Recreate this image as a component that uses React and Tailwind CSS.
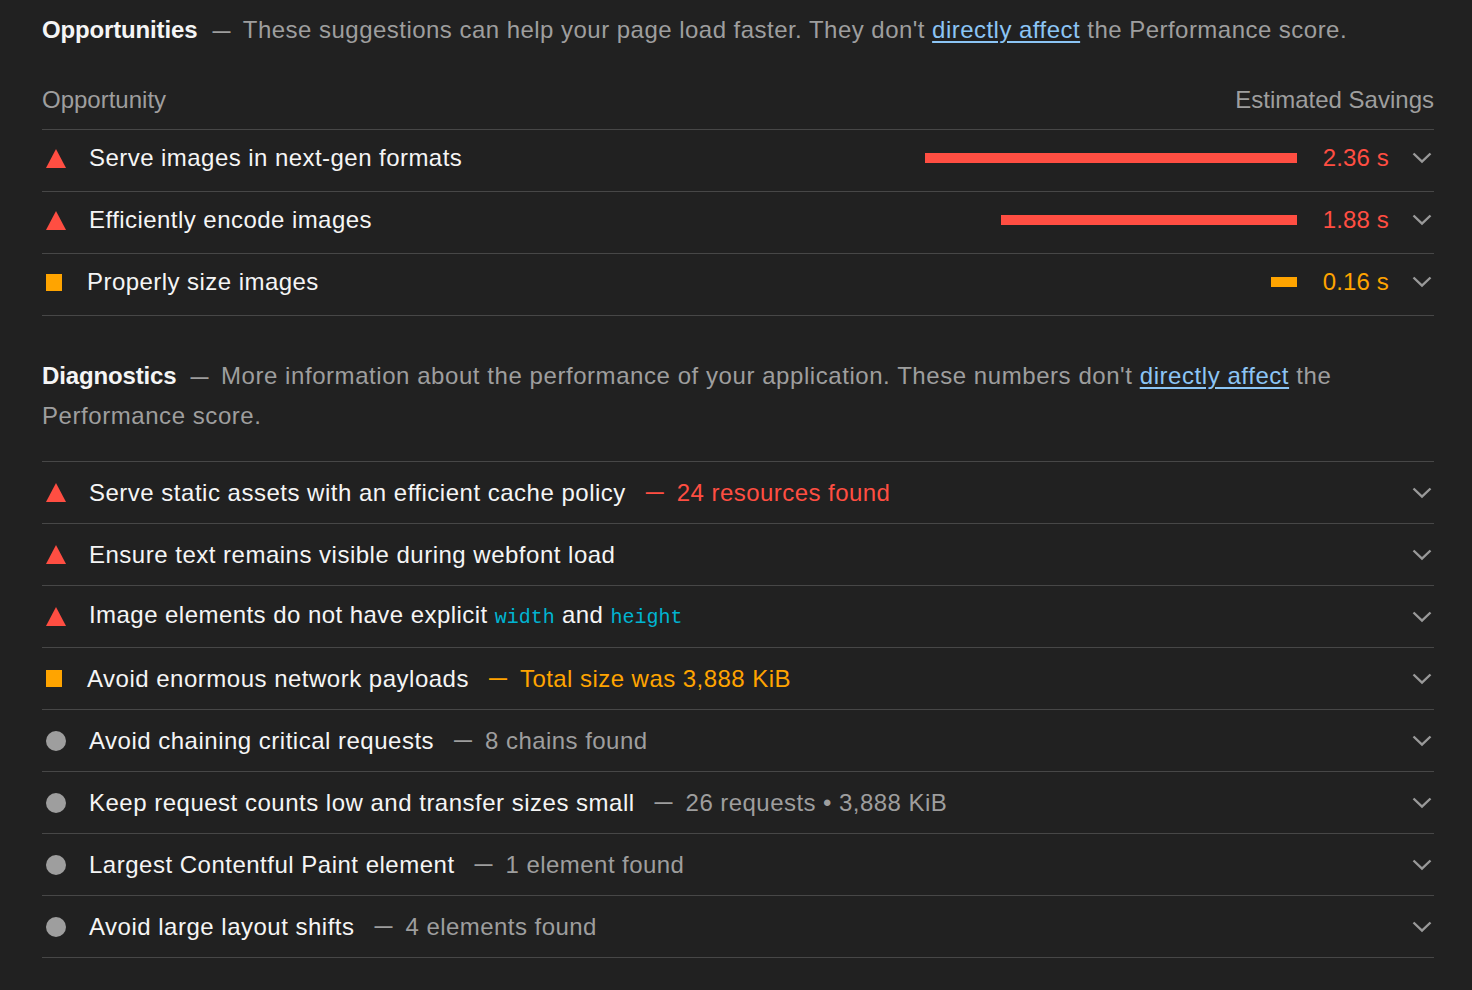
import React from 'react'

const RED = '#ff4e42'
const ORANGE = '#ffa400'

const opportunities = [
  { kind: 'fail', title: 'Serve images in next-gen formats', bar: 372, value: '2.36 s' },
  { kind: 'fail', title: 'Efficiently encode images', bar: 296, value: '1.88 s' },
  { kind: 'average', title: 'Properly size images', bar: 26, value: '0.16 s' },
]

const diagnostics = [
  { kind: 'fail', title: 'Serve static assets with an efficient cache policy', detail: '24 resources found' },
  { kind: 'fail', title: 'Ensure text remains visible during webfont load' },
  { kind: 'fail', code: true },
  { kind: 'average', title: 'Avoid enormous network payloads', detail: 'Total size was 3,888 KiB' },
  { kind: 'info', title: 'Avoid chaining critical requests', detail: '8 chains found' },
  { kind: 'info', title: 'Keep request counts low and transfer sizes small', detail: '26 requests • 3,888 KiB' },
  { kind: 'info', title: 'Largest Contentful Paint element', detail: '1 element found' },
  { kind: 'info', title: 'Avoid large layout shifts', detail: '4 elements found' },
]

function Icon({ kind }) {
  if (kind === 'fail') {
    return (
      <div className="ml-1 mr-[23px] flex w-5 shrink-0 items-center">
        <svg width="20" height="19" viewBox="0 0 20 19">
          <polygon points="10,0 20,19 0,19" fill={RED} />
        </svg>
      </div>
    )
  }
  if (kind === 'average') {
    return (
      <div className="ml-1 mr-[25px] flex w-4 shrink-0 items-center">
        <div className="h-[17px] w-4 bg-[#ffa400]" />
      </div>
    )
  }
  return (
    <div className="ml-1 mr-[23px] flex w-5 shrink-0 items-center justify-center">
      <div className="h-5 w-5 rounded-full bg-[#9e9e9e]" />
    </div>
  )
}

function Chevron() {
  return (
    <svg width="20" height="12" viewBox="0 0 20 12" className="shrink-0">
      <polyline points="1.5,1.5 10,9.5 18.5,1.5" fill="none" stroke="#999999" strokeWidth="2.4" />
    </svg>
  )
}

function Dash({ color = '' }) {
  return (
    <span className={`inline-block -translate-y-[1px] text-[18px] font-bold leading-none ${color}`}>—</span>
  )
}

function OpportunityRow({ item }) {
  const color = item.kind === 'fail' ? 'text-[#ff4e42]' : 'text-[#ffa400]'
  return (
    <div className="flex h-[62px] items-center border-b border-[#474747] pb-[5px]">
      <Icon kind={item.kind} />
      <span className="tracking-[0.45px] text-[#f5f5f5]">{item.title}</span>
      <div className="flex-1" />
      <div
        className="mr-[1px] h-[10px]"
        style={{ width: item.bar, background: item.kind === 'fail' ? RED : ORANGE }}
      />
      <span className={`ml-[25px] whitespace-nowrap tracking-[0.15px] ${color}`}>{item.value}</span>
      <div className="ml-[23px] mr-[2px] flex items-center">
        <Chevron />
      </div>
    </div>
  )
}

function DiagnosticRow({ item }) {
  const detailColor =
    item.kind === 'fail' ? 'text-[#ff4e42]' : item.kind === 'average' ? 'text-[#ffa400]' : 'text-[#9e9e9e]'
  return (
    <div className="flex h-[62px] items-center border-b border-[#474747]">
      <Icon kind={item.kind} />
      {item.code ? (
        <span className="tracking-[0.45px] text-[#f5f5f5]">
          Image elements do not have explicit{' '}
          <code className="font-['Liberation_Mono',monospace] text-[20px] tracking-normal text-[#00b4d2]">width</code>{' '}
          and{' '}
          <code className="font-['Liberation_Mono',monospace] text-[20px] tracking-normal text-[#00b4d2]">height</code>
        </span>
      ) : (
        <span className="whitespace-nowrap tracking-[0.5px] text-[#f5f5f5]">{item.title}</span>
      )}
      {item.detail && (
        <span className="ml-[20px] flex items-center whitespace-nowrap">
          <Dash color={detailColor} />
          <span className={`ml-[13px] tracking-[0.45px] ${detailColor}`}>{item.detail}</span>
        </span>
      )}
      <div className="flex-1" />
      <div className="mr-[2px] flex items-center">
        <Chevron />
      </div>
    </div>
  )
}

export default function App() {
  return (
    <div className="min-h-screen bg-[#212121] pl-[42px] pr-[38px] pt-[10px] font-['Liberation_Sans',Arial,sans-serif] text-[24px] leading-[40px]">
      <div className="tracking-[0.47px] text-[#9e9e9e]">
        <span className="font-bold tracking-[-0.15px] text-[#f5f5f5]">Opportunities</span>
        <span className="ml-[15px] mr-[12px]"><Dash /></span>
        These suggestions can help your page load faster. They don't{' '}
        <a href="#" className="text-[#8cc5f5] underline underline-offset-[3px]">directly affect</a> the Performance score.
      </div>

      <div className="mt-[30px] flex justify-between border-b border-[#474747] pb-[9px] text-[#9e9e9e]">
        <span>Opportunity</span>
        <span>Estimated Savings</span>
      </div>

      {opportunities.map((o) => (
        <OpportunityRow key={o.title} item={o} />
      ))}

      <div className="mt-[40px] tracking-[0.56px] text-[#9e9e9e]">
        <span className="font-bold tracking-[-0.15px] text-[#f5f5f5]">Diagnostics</span>
        <span className="ml-[14px] mr-[12px]"><Dash /></span>
        More information about the performance of your application. These numbers don't{' '}
        <a href="#" className="text-[#8cc5f5] underline underline-offset-[3px]">directly affect</a> the Performance score.
      </div>

      <div className="mt-[25px] border-t border-[#474747]">
        {diagnostics.map((d, i) => (
          <DiagnosticRow key={i} item={d} />
        ))}
      </div>
    </div>
  )
}
